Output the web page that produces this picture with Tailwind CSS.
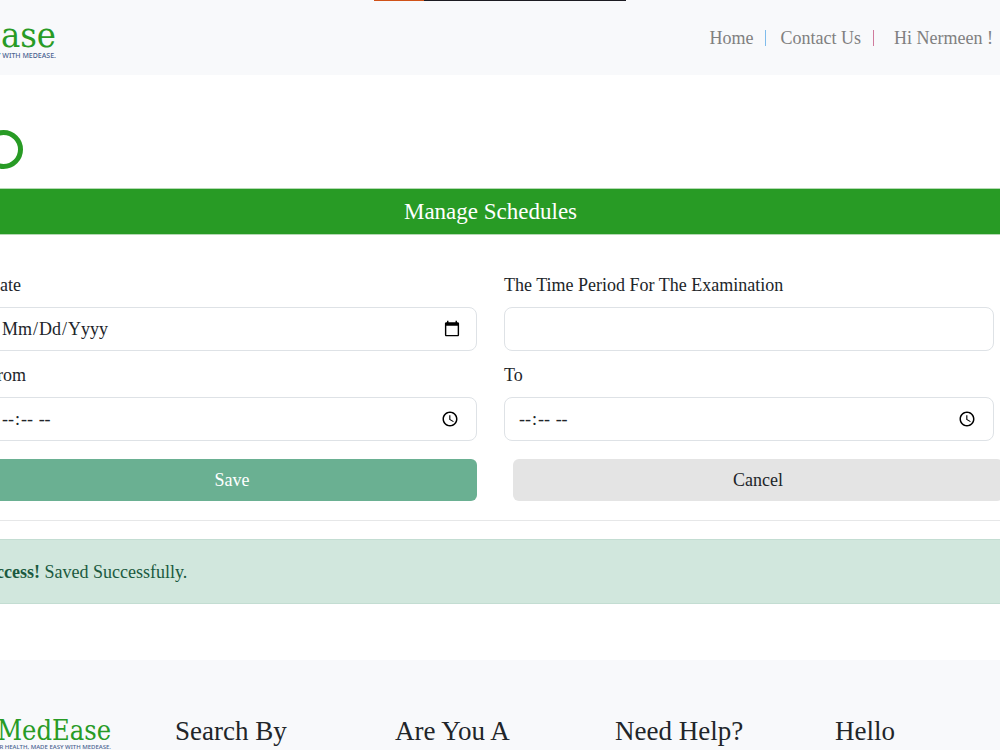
<!DOCTYPE html>
<html lang="en">
<head>
<meta charset="utf-8">
<title>Manage Schedules - MedEase</title>
<script src="https://cdn.jsdelivr.net/npm/@tailwindcss/browser@4"></script>
</head>
<body class="overflow-hidden bg-white font-['Liberation_Serif',serif] text-lg text-[#212529]">
<div class="h-screen overflow-hidden">
  <header class="relative flex h-[75px] items-center justify-between bg-[#f8f9fb] pr-[7px]">
    <div class="absolute top-0 left-[374px] flex h-px w-[252px]" aria-hidden="true">
      <span class="w-[50px] border-b border-[#d05218]"></span><span class="grow border-b border-[#1c1b22]"></span>
    </div>
    <a href="#" class="flex w-14 flex-col items-end whitespace-nowrap">
      <span class="font-['DejaVu_Serif_Condensed','DejaVu_Serif',serif] text-4xl leading-9 text-[#289b25]">MedEase</span>
      <span class="font-['Noto_Sans',sans-serif] text-[7px] leading-[6px] font-medium text-[#4a6391]">YOUR HEALTH, MADE EASY WITH MEDEASE.</span>
    </a>
    <nav class="flex items-center text-[#808080]">
      <a href="#">Home</a>
      <span class="mr-[15px] ml-[11px] h-4 w-px bg-[#7fbcec]"></span>
      <a href="#">Contact Us</a>
      <span class="mr-5 ml-3 h-4 w-px bg-[#d07a9c]"></span>
      <a href="#">Hi Nermeen !</a>
    </nav>
  </header>

  <main>
    <div class="pt-[55px] pb-[19px]">
      <div class="-ml-4 size-[39px] rounded-full border-5 border-[#289b25]"></div>
    </div>
    <h1 class="flex h-[47px] items-center justify-center border-y border-[#b4d9b3] bg-[#289b25] pr-[19px] text-[23px] text-white">Manage Schedules</h1>

    <form class="-ml-[13px] pt-9">
      <div class="grid grid-cols-2 gap-x-[27px] gap-y-2.5 pr-1.5">
        <div class="flex flex-col gap-2">
          <label for="date">Date</label>
          <input id="date" type="date" class="h-11 rounded-lg border border-[#dee2e6] px-[13px] capitalize">
        </div>
        <div class="flex flex-col gap-2">
          <label for="period">The Time Period For The Examination</label>
          <input id="period" type="text" class="h-11 rounded-lg border border-[#dee2e6] px-[13px]">
        </div>
        <div class="flex flex-col gap-2">
          <label for="from">From</label>
          <input id="from" type="time" class="h-11 rounded-lg border border-[#dee2e6] px-[13px]">
        </div>
        <div class="flex flex-col gap-2">
          <label for="to">To</label>
          <input id="to" type="time" class="h-11 rounded-lg border border-[#dee2e6] px-[13px]">
        </div>
      </div>
      <div class="-mr-[3px] grid grid-cols-2 gap-x-9 pt-[18px]">
        <button type="submit" class="h-[42px] rounded-md bg-[#6ab092] text-white">Save</button>
        <button type="button" class="h-[42px] rounded-md bg-[#e4e4e4]">Cancel</button>
      </div>
    </form>

    <hr class="mt-[19px] mb-[18px] border-[#e6e7e8]">
    <div role="alert" class="-ml-6 flex h-[65px] items-center border-y border-[#c3ddd2] bg-[#d1e7dd] text-[#1b5a40]">
      <p><strong>Success!</strong> Saved Successfully.</p>
    </div>
  </main>

  <footer class="mt-14 flex bg-[#f8f9fb] pt-[55px] pb-12 text-[27px] leading-8">
    <a href="#" class="flex w-[111px] shrink-0 flex-col items-end pt-0.5 whitespace-nowrap">
      <span class="font-['DejaVu_Serif_Condensed','DejaVu_Serif',serif] text-[27px] leading-7 text-[#289b25]">MedEase</span>
      <span class="font-['Noto_Sans',sans-serif] text-[6px] leading-[4px] font-medium text-[#4a6391]">YOUR HEALTH, MADE EASY WITH MEDEASE.</span>
    </a>
    <div class="ml-16 grid grow grid-cols-[repeat(3,220px)_1fr]">
      <h2>Search By</h2>
      <h2>Are You A</h2>
      <h2>Need Help?</h2>
      <h2>Hello</h2>
    </div>
  </footer>
</div>
</body>
</html>
